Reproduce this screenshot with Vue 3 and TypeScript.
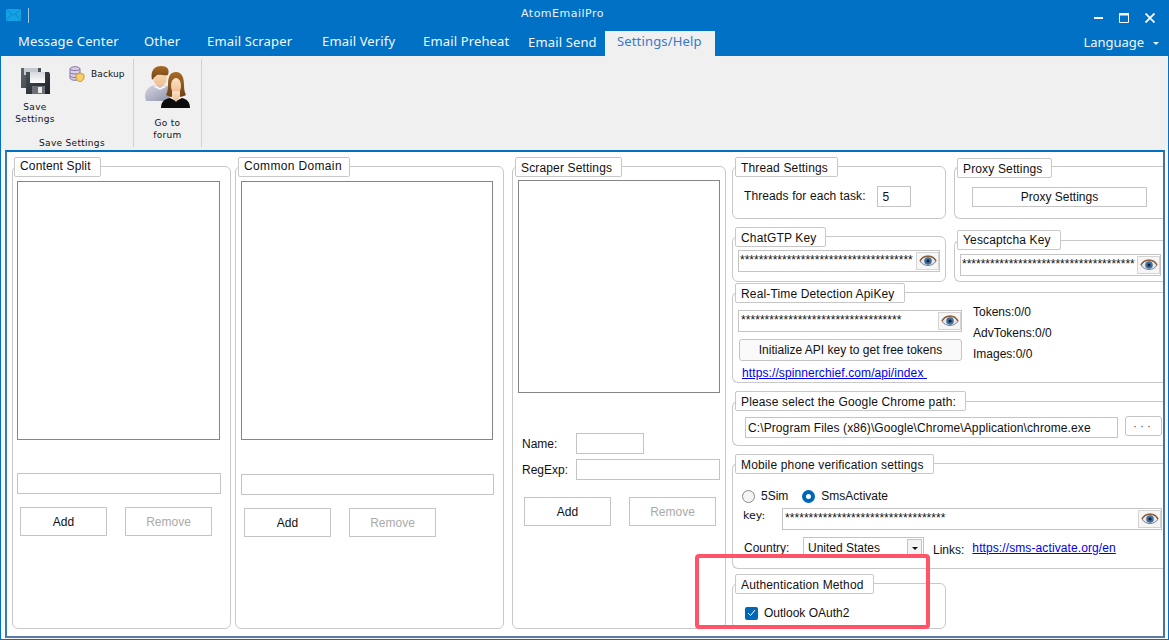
<script setup lang="ts">
const tabs = [
  { label: 'Message Center', width: 126 },
  { label: 'Other', width: 63 },
  { label: 'Email Scraper', width: 115 },
  { label: 'Email Verify', width: 101 },
  { label: 'Email Preheat', width: 105 },
  { label: 'Email Send', width: 95 },
]
const stars = (n: number) => '*'.repeat(n)
</script>

<template>
  <div class="window">
    <header class="titlebar">
      <div class="brand">
        <svg width="15" height="12" viewBox="0 0 15 12">
          <rect width="15" height="12" fill="#13a3e4" />
          <path d="M0 0L7.500 6.500L15 0M0 12L5.500 5M15 12L9.500 5" fill="none" stroke="#0d86cf" stroke-width="1" />
        </svg>
        <i class="brand-sep"></i>
      </div>
      <div class="title">AtomEmailPro</div>
      <div class="win-btns">
        <svg width="9" height="10" viewBox="0 0 9 10"><rect y="4" width="9" height="2" fill="#fff" /></svg>
        <svg width="10" height="10" viewBox="0 0 10 10"><path d="M.5.5h9v9h-9z" fill="none" stroke="#fff" /><rect width="10" height="2.500" fill="#fff" /></svg>
        <svg width="10" height="10" viewBox="0 0 10 10"><path d="M.5.5l9 9M9.500.5l-9 9" stroke="#fff" stroke-width="1.800" /></svg>
      </div>
    </header>
    <nav class="tabs">
      <span v-for="t in tabs" :key="t.label" class="tab" :style="{ width: t.width + 'px' }">{{ t.label }}</span>
      <span class="tab active">Settings/Help</span>
      <span class="lang">Language<i class="caret"></i></span>
    </nav>
    <section class="ribbon">
      <div class="rgroup first">
        <div class="rrow">
          <div class="rbtn save">
            <svg width="29" height="27" viewBox="0 0 29 27">
              <defs>
                <linearGradient id="disk" x1="0" y1="0" x2="0" y2="1">
                  <stop offset="0" stop-color="#d5d8de" />
                  <stop offset="1" stop-color="#ffffff" />
                </linearGradient>
                <linearGradient id="body" x1="0" y1="0" x2="1" y2="1">
                  <stop offset="0" stop-color="#4a5058" />
                  <stop offset="1" stop-color="#1d2126" />
                </linearGradient>
              </defs>
              <path d="M0 1h20v20H0z" fill="url(#body)" opacity=".85" />
              <path d="M3 1h14v7H3z" fill="#c5c9cf" />
              <path d="M5 5h23l1 2v20H5z" fill="url(#body)" />
              <path d="M9 5h15v11H9z" fill="url(#disk)" />
              <path d="M11 19h13v8H11z" fill="#6b7077" />
              <path d="M17 20h4v6h-4z" fill="#e8e8e8" />
            </svg>
            <span>Save<br />Settings</span>
          </div>
          <div class="backup">
            <svg width="16" height="16" viewBox="0 0 16 16">
              <path d="M1 3c0-3 10-3 10 0v9c0 3-10 3-10 0z" fill="#d9d0ea" stroke="#85739f" />
              <path d="M1 3c1 2 9 2 10 0M1 6.500c1 2 9 2 10 0M1 10c1 2 9 2 10 0" fill="none" stroke="#85739f" />
              <path d="M7 8.500l4-1.500 4 1.500v3c0 2-2 3.500-4 4.500-2-1-4-2.500-4-4.500z" fill="#f5cd6a" stroke="#c8982e" />
            </svg>
            <span>Backup</span>
          </div>
        </div>
        <div class="rcaption">Save Settings</div>
      </div>
      <div class="rgroup">
        <div class="rbtn forum">
          <svg width="45" height="43" viewBox="0 0 45 43">
            <defs>
              <linearGradient id="shirt" x1="0" y1="0" x2="1" y2="1">
                <stop offset="0" stop-color="#d6d7e4" />
                <stop offset="1" stop-color="#8d90a8" />
              </linearGradient>
              <linearGradient id="skin" x1="0" y1="0" x2="0" y2="1">
                <stop offset="0" stop-color="#fbe2c4" />
                <stop offset="1" stop-color="#eebd91" />
              </linearGradient>
              <linearGradient id="hair" x1="0" y1="0" x2="0" y2="1">
                <stop offset="0" stop-color="#a86a26" />
                <stop offset="1" stop-color="#6e4215" />
              </linearGradient>
            </defs>
            <path d="M0 31c0-7 4-11 10-12h9c4 1 8 3 8 9l-4 7H1z" fill="url(#shirt)" />
            <path d="M10 19l5 3 5-3 1 2-6 3-6-3z" fill="#f4f4f8" />
            <ellipse cx="15" cy="11" rx="7" ry="9.500" fill="url(#skin)" />
            <path d="M7 14C5 4 10 0 16 0s9 3 7 9c-4 1-8-1-11 0-2 1-3 3-5 5z" fill="url(#hair)" />
            <path d="M16 42c0-6 3-9 9-10l6 3 6-3c5 1 8 4 8 10z" fill="#0c0c0c" />
            <path d="M23 19c0-10 3-13 8-13s8 4 8 13c0 5 1 8 2 10-5 3-15 3-20 0 1-2 2-5 2-10z" fill="url(#hair)" />
            <ellipse cx="31" cy="20" rx="5" ry="8" fill="url(#skin)" />
            <path d="M27 25h8v6l-4 5-4-5z" fill="url(#skin)" />
          </svg>
          <span>Go to<br />forum</span>
        </div>
      </div>
    </section>

    <main class="panel">
      <div class="group col-a">
        <h3 class="legend">Content Split</h3>
        <div class="listbox la"></div>
        <div class="textbox ia"></div>
        <div class="btn-row">
          <button class="btn">Add</button>
          <button class="btn off">Remove</button>
        </div>
      </div>
      <div class="group col-b">
        <h3 class="legend">Common Domain</h3>
        <div class="listbox lb"></div>
        <div class="textbox ib"></div>
        <div class="btn-row">
          <button class="btn">Add</button>
          <button class="btn off">Remove</button>
        </div>
      </div>
      <div class="group col-c">
        <h3 class="legend tall">Scraper Settings</h3>
        <div class="listbox lc"></div>
        <div class="form-row nm"><label>Name:</label><div class="textbox short"></div></div>
        <div class="form-row re"><label>RegExp:</label><div class="textbox wide"></div></div>
        <div class="btn-row c">
          <button class="btn">Add</button>
          <button class="btn off">Remove</button>
        </div>
      </div>

      <div class="right">
        <div class="pair p1">
          <div class="group half">
            <h3 class="legend tall">Thread Settings</h3>
            <div class="threads"><span class="threads-label">Threads for each task:</span><div class="textbox num">5</div></div>
          </div>
          <div class="group half r proxy">
            <h3 class="legend tall">Proxy Settings</h3>
            <button class="btn proxy-btn">Proxy Settings</button>
          </div>
        </div>
        <div class="pair p2">
          <div class="group half">
            <h3 class="legend tall">ChatGTP Key</h3>
            <div class="secret s1"><span class="val">{{ stars(37) }}</span><span class="eye"><svg width="18" height="12" viewBox="0 0 18 12"><path d="M1 6c3-6.500 13-6.500 16 0-3 6-13 6-16 0z" fill="#e6e8ee" stroke="#7a7f8c" /><path d="M1 6c3-6.500 13-6.500 16 0" fill="none" stroke="#8f5f3c" stroke-width="1.500" /><circle cx="9" cy="6" r="3.800" fill="#3f6f9e" /><circle cx="9" cy="6" r="1.600" fill="#16222e" /></svg></span></div>
          </div>
          <div class="group half r yes">
            <h3 class="legend">Yescaptcha Key</h3>
            <div class="secret s2"><span class="val">{{ stars(37) }}</span><span class="eye"><svg width="18" height="12" viewBox="0 0 18 12"><path d="M1 6c3-6.500 13-6.500 16 0-3 6-13 6-16 0z" fill="#e6e8ee" stroke="#7a7f8c" /><path d="M1 6c3-6.500 13-6.500 16 0" fill="none" stroke="#8f5f3c" stroke-width="1.500" /><circle cx="9" cy="6" r="3.800" fill="#3f6f9e" /><circle cx="9" cy="6" r="1.600" fill="#16222e" /></svg></span></div>
          </div>
        </div>
        <div class="group rt">
          <h3 class="legend tall">Real-Time Detection ApiKey</h3>
          <div class="rt-body">
            <div class="rt-left">
              <div class="secret s3"><span class="val">{{ stars(34) }}</span><span class="eye"><svg width="18" height="12" viewBox="0 0 18 12"><path d="M1 6c3-6.500 13-6.500 16 0-3 6-13 6-16 0z" fill="#e6e8ee" stroke="#7a7f8c" /><path d="M1 6c3-6.500 13-6.500 16 0" fill="none" stroke="#8f5f3c" stroke-width="1.500" /><circle cx="9" cy="6" r="3.800" fill="#3f6f9e" /><circle cx="9" cy="6" r="1.600" fill="#16222e" /></svg></span></div>
              <button class="btn init">Initialize API key to get free tokens</button>
              <a class="link rt-link">https://spinnerchief.com/api/index&nbsp;</a>
            </div>
            <div class="rt-stats">
              <span>Tokens:0/0</span>
              <span>AdvTokens:0/0</span>
              <span>Images:0/0</span>
            </div>
          </div>
        </div>
        <div class="group chrome">
          <h3 class="legend tall">Please select the Google Chrome path:</h3>
          <div class="chrome-row">
            <div class="textbox path">C:\Program Files (x86)\Google\Chrome\Application\chrome.exe</div>
            <button class="btn dots">···</button>
          </div>
        </div>
        <div class="group mobile">
          <h3 class="legend tall">Mobile phone verification settings</h3>
          <div class="radios">
            <span class="radio"></span><span class="rl1">5Sim</span>
            <span class="radio on"></span><span>SmsActivate</span>
          </div>
          <div class="key-row">
            <label>key:</label>
            <div class="secret s4"><span class="val">{{ stars(34) }}</span><span class="eye"><svg width="18" height="12" viewBox="0 0 18 12"><path d="M1 6c3-6.500 13-6.500 16 0-3 6-13 6-16 0z" fill="#e6e8ee" stroke="#7a7f8c" /><path d="M1 6c3-6.500 13-6.500 16 0" fill="none" stroke="#8f5f3c" stroke-width="1.500" /><circle cx="9" cy="6" r="3.800" fill="#3f6f9e" /><circle cx="9" cy="6" r="1.600" fill="#16222e" /></svg></span></div>
          </div>
          <div class="country-row">
            <label>Country:</label>
            <div class="select"><span>United States</span><i class="sel-btn"></i></div>
            <span class="links">Links:</span>
            <a class="link">https://sms-activate.org/en</a>
          </div>
        </div>
        <div class="group auth">
          <h3 class="legend tall">Authentication Method</h3>
          <div class="check-row">
            <span class="check"><svg width="9" height="8" viewBox="0 0 9 8"><path d="M1 4l2.500 2.500L8 1" fill="none" stroke="#fff" /></svg></span>
            <span>Outlook OAuth2</span>
          </div>
        </div>
      </div>
      <div class="callout"></div>
    </main>
  </div>
</template>

<style>
html, body { margin: 0; background: #fff; overflow: hidden; }
</style>

<style scoped>
.window {
  width: 1169px;
  height: 640px;
  box-sizing: border-box;
  display: flex;
  flex-direction: column;
  background: #f8f8f8;
  border: solid #0071c5;
  border-width: 0 1px 1px;
  font-family: "Liberation Sans", Arial, sans-serif;
  font-size: 12px;
  color: #111;
  overflow: hidden;
}
.titlebar {
  height: 28px;
  background: #0071c5;
  margin: 0 -1px;
  position: relative;
  display: flex;
  align-items: center;
  color: #fff;
  flex: none;
}
.brand { display: flex; align-items: center; gap: 7px; padding-left: 6px; margin-top: 2px; }
.brand-sep { width: 1px; height: 15px; background: #9cc6e6; }
.title {
  position: absolute;
  left: 521px;
  top: 6px;
  font-family: "DejaVu Sans", sans-serif;
  font-size: 11px;
  letter-spacing: .5px;
  line-height: 16px;
  color: #e6f2fb;
}
.win-btns { margin-left: auto; display: flex; gap: 16px; padding-right: 14px; margin-top: 7px; align-items: center; }
.tabs {
  height: 28px;
  background: #0071c5;
  margin: 0 -1px;
  display: flex;
  padding-left: 18px;
  color: #f2f8fd;
  font-family: "Noto Sans", sans-serif;
  font-size: 13px;
  letter-spacing: .15px;
  flex: none;
  align-items: stretch;
}
.tab { line-height: 27px; white-space: nowrap; box-sizing: border-box; flex: none; }
.tab:nth-child(6) { padding-top: 1px; }
.tab.active {
  margin-left: -18px;
  margin-top: 3px;
  width: 110px;
  background: #f0f0f0;
  color: #3a78c8;
  padding-left: 12px;
  line-height: 21px;
}
.lang { margin-left: auto; padding-right: 10px; line-height: 29px; display: flex; align-items: center; letter-spacing: -.05px; }
.caret {
  width: 0; height: 0; margin-left: 9px; margin-top: 2px;
  border: 3px solid transparent; border-top: 3px solid #e8f3fb; border-bottom: 0;
}
.ribbon {
  height: 94px;
  flex: none;
  display: flex;
  background: #f0f0f0;
  font-family: "DejaVu Sans", sans-serif;
  font-size: 9px;
  line-height: 12px;
  padding-top: 3px;
  box-sizing: border-box;
  letter-spacing: .3px;
}
.rgroup {
  height: 88px;
  border-right: 1px solid #d0d0d0;
  position: relative;
  flex: none;
}
.rgroup.first { width: 132px; }
.rgroup:not(.first) { width: 67px; }
.rrow { display: flex; }
.rbtn { display: flex; flex-direction: column; align-items: center; text-align: center; }
.rbtn.save { width: 68px; padding-top: 8px; }
.rbtn.save svg { margin-bottom: 7px; }
.rbtn.forum { padding-top: 7px; width: 67px; }
.rbtn.forum svg { margin-bottom: 8px; }
.backup { display: flex; gap: 6px; padding-top: 7px; height: 16px; align-items: center; letter-spacing: .1px; }
.rcaption { position: absolute; left: 0; right: 0; bottom: -2px; padding-left: 10px; text-align: center; }
.panel {
  flex: 1;
  min-height: 0;
  margin: 0 3px 1px 4px;
  background: #fff;
  border: solid #0071c5;
  border-width: 2px;
  border-left-color: #3b78b8;
  border-right-color: #4a6fa8;
  border-bottom-color: #5a7ba8;
  position: relative;
  display: flex;
  align-items: flex-start;
  padding-top: 14px;
  box-sizing: border-box;
}
.group {
  border: 1px solid #c8c8c8;
  border-radius: 6px;
  box-sizing: border-box;
  position: relative;
  flex: none;
}
.legend {
  margin: -10px 0 0 2px;
  height: 20px;
  width: fit-content;
  box-sizing: border-box;
  padding: 0 9px 0 5px;
  border: 1px solid #c8c8c8;
  border-radius: 2px;
  background: #fff;
  font: 400 12px/17px "Liberation Sans", Arial, sans-serif;
  letter-spacing: .15px;
  color: #111;
}
.legend.tall { line-height: 20px; }
.yes .legend { line-height: 19px; }
.col-a { width: 219px; height: 463px; margin-left: 5px; }
.col-a .legend { margin-left: 1px; }
.col-b { width: 269px; height: 463px; margin-left: 4px; }
.col-b .legend { letter-spacing: .35px; padding-right: 7px; }
.col-c { width: 214px; height: 463px; margin-left: 8px; }
.listbox { border: 1px solid #85858c; box-sizing: border-box; background: #fff; }
.la { width: 203px; height: 259px; margin: 4px 0 0 4px; }
.lb { width: 252px; height: 259px; margin: 4px 0 0 5px; }
.lc { width: 202px; height: 213px; margin: 3px 0 0 5px; }
.textbox { border: 1px solid #c4c4c4; box-sizing: border-box; height: 21px; background: #fff; color: #111; }
.ia { width: 204px; margin: 33px 0 0 4px; }
.ib { width: 253px; margin: 34px 0 0 5px; }
.btn-row { display: flex; gap: 18px; margin: 13px 0 0 7px; }
.col-b .btn-row { margin-left: 8px; }
.btn {
  width: 87px;
  height: 29px;
  padding: 0;
  border: 1px solid #c4c4c4;
  background: #fff;
  color: #111;
  font: 12px "Liberation Sans", Arial, sans-serif;
}
.btn.off { color: #aaa; }
.btn-row.c { margin: 17px 0 0 11px; }
.form-row { display: flex; align-items: center; }
.form-row label { width: 63px; padding-left: 9px; box-sizing: border-box; flex: none; }
.nm { margin-top: 40px; height: 21px; }
.re { margin-top: 5px; height: 21px; }
.short { width: 68px; }
.wide { width: 144px; }

.right { width: 431px; margin-left: 6px; flex: none; }
.pair { display: flex; gap: 8px; }
.half { width: 214px; }
.half.r { width: 209px; border-right: 0; border-radius: 6px 0 0 6px; }
.p1, .p1 .half { height: 53px; }
.proxy .legend { margin-top: -9px; }
.threads { display: flex; align-items: center; gap: 11px; padding: 9px 0 0 11px; letter-spacing: .1px; }
.threads-label { padding-bottom: 2px; }
.num { width: 34px; padding: 3px 0 0 5px; }
.proxy-btn { display: block; width: 175px; height: 20px; margin: 9px 0 0 17px; }
.p2 { margin-top: 17px; }
.p2, .p2 .half { height: 46px; }
.half.yes { margin-top: 4px; height: 42px; }
.yes .legend { margin-top: -11px; }
.secret {
  border: 1px solid #c4c4c4;
  box-sizing: border-box;
  height: 22px;
  display: flex;
  align-items: center;
  justify-content: space-between;
  background: #fff;
}
.val {
  font-size: 12px;
  line-height: 13px;
  padding: 0 0 2px 2px;
  letter-spacing: .05px;
  white-space: nowrap;
  flex: 1;
  min-width: 0;
}
.s1 .val, .s2 .val { letter-spacing: 0; padding-left: 1px; }
.eye {
  width: 23px; height: 18px; border: 1px solid #d4d4d4; box-sizing: border-box;
  flex: none; display: flex; align-items: center; justify-content: center; background: #f6f6f6; margin-right: 0;
}
.s1 { width: 202px; margin: 3px 0 0 5px; }
.s2 { width: 201px; margin: 4px 0 0 5px; }
.s3 { width: 224px; }
.s4 { width: 380px; }
.rt { margin-top: 10px; height: 91px; border-right: 0; border-radius: 6px 0 0 6px; }
.rt .legend { margin-top: -10px; }
.rt-body { display: flex; padding: 7px 0 0 5px; }
.rt-left { width: 235px; flex: none; }
.init { display: block; width: 223px; height: 22px; margin: 7px 0 0 1px; border-radius: 3px; background: #fafafa; }
.link { color: #0000ee; text-decoration: underline; cursor: pointer; white-space: nowrap; letter-spacing: .1px; }
.rt-link { display: block; margin: 5px 0 0 4px; line-height: 14px; }
.rt-stats { display: flex; flex-direction: column; line-height: 21px; margin-top: -8px; }
.chrome { margin-top: 18px; height: 45px; border-right: 0; border-radius: 6px 0 0 6px; }
.chrome .legend { margin-top: -11px; }
.chrome-row { display: flex; gap: 7px; margin: 6px 0 0 12px; align-items: flex-start; }
.path { width: 373px; padding: 3px 0 0 2px; white-space: nowrap; overflow: hidden; letter-spacing: .1px; }
.dots { width: 37px; height: 20px; border-radius: 3px; letter-spacing: 3px; margin-top: -1px; color: #555; }
.mobile { margin-top: 17px; height: 106px; border-right: 0; border-radius: 6px 0 0 6px; }
.radios { display: flex; align-items: center; padding: 15px 0 0 9px; height: 14px; box-sizing: content-box; }
.radio { width: 11px; height: 11px; border-radius: 50%; border: 1px solid #8a8a8a; background: #f4f4f4; margin-right: 6px; flex: none; }
.radio.on { border: 4px solid #0067b8; width: 5px; height: 5px; background: #fff; }
.rl1 { margin-right: 14px; }
.key-row { display: flex; margin-top: 5px; }
.key-row label { width: 49px; padding: 1px 0 0 10px; box-sizing: border-box; font-family: "DejaVu Sans", sans-serif; font-size: 11px; }
.country-row { display: flex; margin-top: 7px; position: relative; height: 21px; }
.country-row label { width: 59px; padding: 4px 0 0 11px; box-sizing: content-box; flex: none; }
.select {
  width: 121px; height: 21px; box-sizing: border-box; border: 1px solid #c4c4c4; border-bottom: 0;
  padding: 3px 0 0 4px; position: relative; background: #fff;
}
.sel-btn { position: absolute; right: 1px; top: 1px; width: 15px; height: 18px; border: 1px solid #c4c4c4; box-sizing: border-box; background: #f4f4f4; }
.sel-btn::after {
  content: ""; position: absolute; left: 4px; top: 7px; border: 3px solid transparent; border-top: 3px solid #111; border-bottom: 0;
}
.links { margin-left: 9px; padding-top: 6px; }
.country-row .link { margin-left: 8px; padding-top: 4px; }
.auth { margin-top: 14px; height: 46px; width: 214px; }
.check-row { display: flex; align-items: center; gap: 6px; padding: 12px 0 0 12px; }
.check {
  width: 13px; height: 13px; border-radius: 2px; background: #0067b8;
  display: flex; align-items: center; justify-content: center; flex: none;
}
.callout {
  position: absolute;
  left: 688px;
  top: 402px;
  width: 235px;
  height: 75px;
  box-sizing: border-box;
  border: 4px solid #ff5468;
  border-radius: 4px;
  pointer-events: none;
}
</style>
